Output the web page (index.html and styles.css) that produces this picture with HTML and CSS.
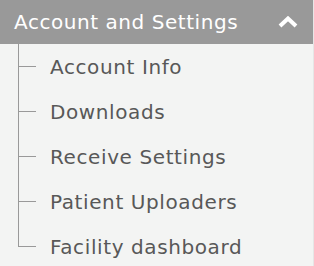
FILE: index.html
```html
<!DOCTYPE html>
<html lang="en">
<head>
    <meta charset="UTF-8">
    <meta name="viewport" content="width=device-width, initial-scale=1.0">
    <title>Account and Settings</title>
    <link rel="stylesheet" href="styles.css">
</head>
<body>
    <div class="menu">
        <div class="menu-header">
            <span class="menu-title">Account and Settings</span>
            <svg class="chevron" width="20" height="12" viewBox="0 0 20 12">
                <polyline points="2,10 10,2.5 18,10" fill="none" stroke="#fff" stroke-width="4" stroke-linejoin="miter"/>
            </svg>
        </div>
        <ul class="submenu">
            <li class="submenu-item">Account Info</li>
            <li class="submenu-item">Downloads</li>
            <li class="submenu-item">Receive Settings</li>
            <li class="submenu-item">Patient Uploaders</li>
            <li class="submenu-item">Facility dashboard</li>
        </ul>
    </div>
</body>
</html>
```

FILE: styles.css
```css
html, body {
    margin: 0;
    padding: 0;
    background-color: #f3f4f3;
}
body {
    font-family: 'DejaVu Sans', sans-serif;
    width: 314px;
    height: 266px;
    overflow: hidden;
}
.menu {
    width: 313px;
    height: 266px;
    border-right: 1px solid #e6e6e6;
}
.menu-header {
    display: flex;
    align-items: center;
    justify-content: space-between;
    height: 44px;
    padding: 0 13px 0 14px;
    background-color: #999999;
    color: #fff;
    box-sizing: border-box;
}
.menu-title {
    font-size: 20px;
    letter-spacing: 0.55px;
}
.chevron {
    display: block;
    margin-right: 2px;
}
.submenu {
    list-style: none;
    margin: 0;
    padding: 0 0 0 18px;
}
.submenu-item {
    position: relative;
    display: flex;
    align-items: center;
    height: 45px;
    padding-left: 32px;
    font-size: 20px;
    letter-spacing: 0.6px;
    color: #585858;
}
/* tree lines */
.submenu-item::before {
    content: '';
    position: absolute;
    left: 0;
    top: 0;
    bottom: 0;
    border-left: 1px solid #999;
}
.submenu-item:last-child::before {
    bottom: 22px;
}
.submenu-item::after {
    content: '';
    position: absolute;
    left: 0;
    top: 22px;
    width: 18px;
    border-top: 1px solid #999;
}
```
